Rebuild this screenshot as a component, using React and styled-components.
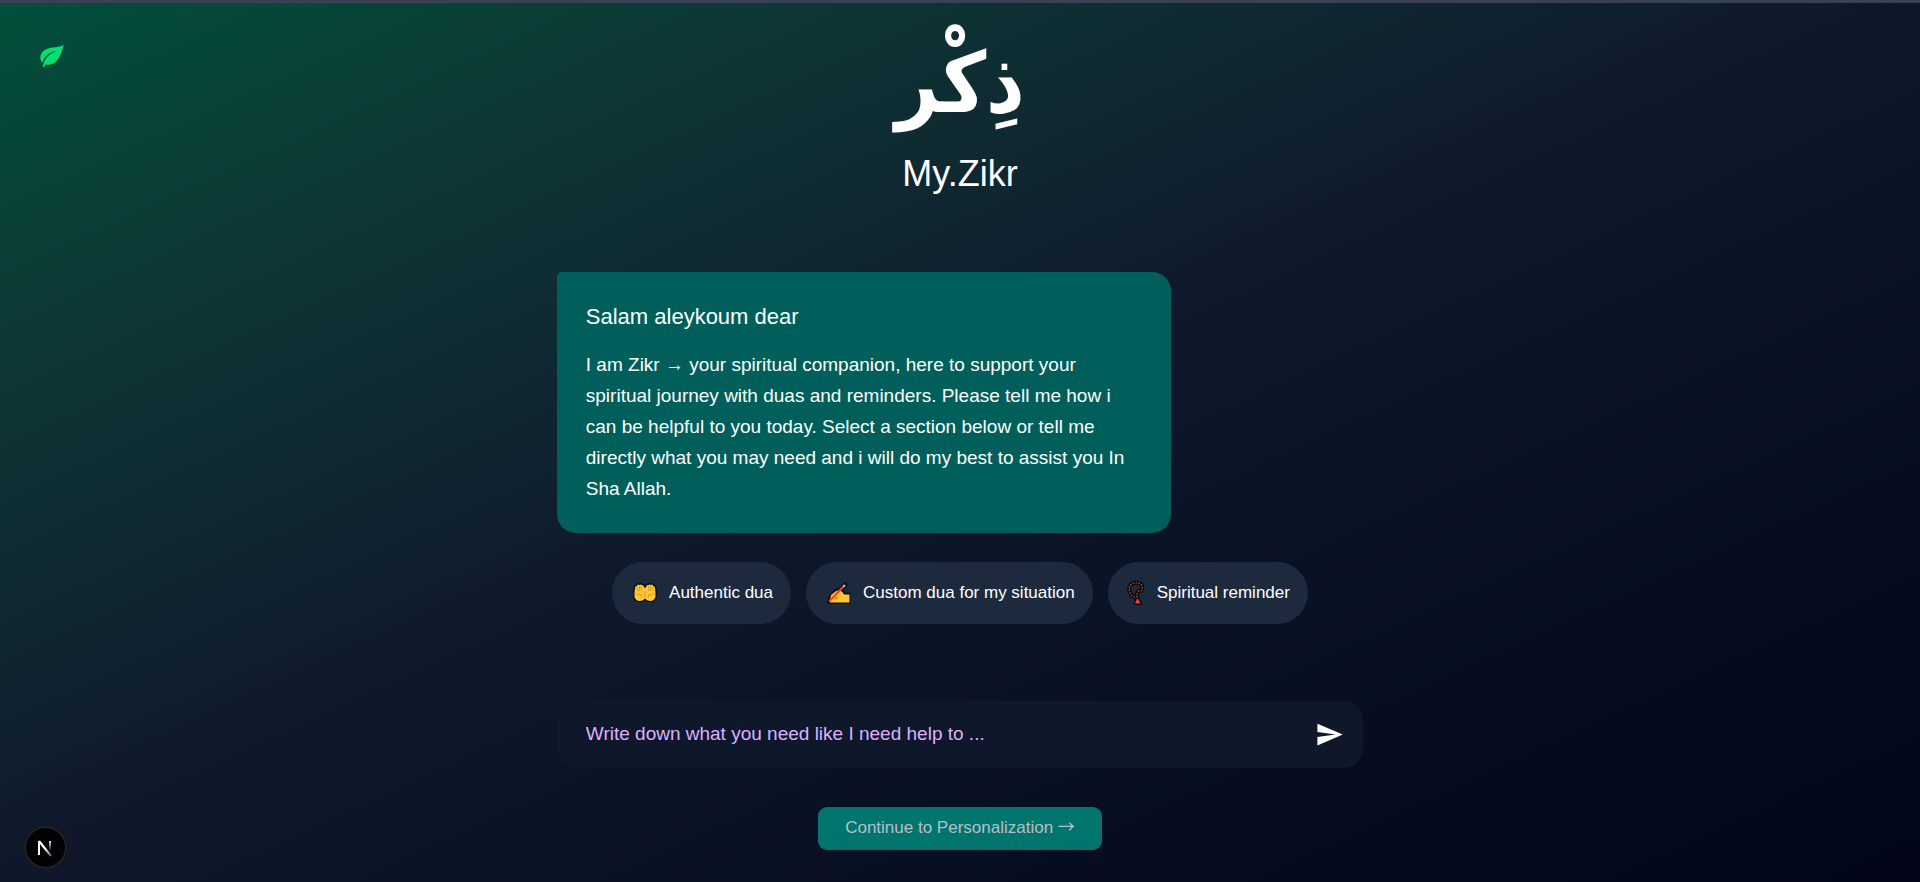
import React from "react";
import styled, { createGlobalStyle } from "styled-components";
import { MdSend } from "react-icons/md";

const GlobalStyle = createGlobalStyle`
  *, *::before, *::after { box-sizing: border-box; }
  body {
    margin: 0;
    background: #020618;
    color: #fff;
    font-family: "Liberation Sans", Arial, sans-serif;
  }
  button, input { font: inherit; color: inherit; border: 0; }
`;

const Page = styled.div`
  position: relative;
  display: flex;
  flex-direction: column;
  align-items: center;
  min-height: 100vh;
  padding-bottom: 32px;
  border-top: 3px solid #3b4155;
  background: linear-gradient(to bottom right in oklab, #004f3b, #0f172b, #020618) border-box;
`;

const HomeLink = styled.a`
  position: absolute;
  top: 41px;
  left: 40px;
  display: flex;
  color: #05df72;
`;

const DevBadge = styled.button`
  position: fixed;
  left: 24px;
  bottom: 13px;
  display: flex;
  align-items: center;
  justify-content: center;
  width: 43px;
  height: 43px;
  padding: 0;
  border-radius: 50%;
  background: #020305;
  box-shadow: inset 0 0 0 2px #222327;
`;

const Header = styled.header`
  display: flex;
  flex-direction: column;
  align-items: center;
  height: 269px;
`;

const Calligraphy = styled.span`
  height: 149px;
  font-family: "DejaVu Sans Condensed", "DejaVu Sans", sans-serif;
  font-size: 84px;
  font-weight: 700;
  line-height: 160px;
`;

const Brand = styled.h1`
  margin: 0;
  font-size: 36px;
  font-weight: 400;
  line-height: 44px;
`;

const Main = styled.main`
  display: flex;
  flex-direction: column;
  align-items: center;
  width: 42%;
`;

const Message = styled.section`
  align-self: flex-start;
  width: 76.2%;
  padding: 28px 29px 29px;
  border-radius: 5px 19px 19px 19px;
  background: #005f5a;
`;

const Greeting = styled.h2`
  margin: 0 0 16px;
  font-size: 22px;
  font-weight: 400;
  line-height: 33px;
`;

const Body = styled.p`
  margin: 0;
  font-size: 19px;
  line-height: 31px;
`;

const Arrow = styled.span`
  font-family: "Noto Sans CJK JP", sans-serif;
  line-height: 1;
`;

const Chips = styled.div`
  display: flex;
  flex-wrap: wrap;
  justify-content: center;
  gap: 15px;
  margin: 29px 0 77px;
`;

const Chip = styled.button`
  display: flex;
  align-items: center;
  gap: 10px;
  height: 62px;
  padding: 0 18px;
  border-radius: 31px;
  background: #1d293d;
  font-size: 17px;
  line-height: 24px;
  white-space: nowrap;
`;

const ChipIcon = styled.span`
  display: flex;
  justify-content: center;
  width: ${(p) => (p.$narrow ? 21 : 29)}px;
`;

const Composer = styled.form`
  display: flex;
  align-items: center;
  width: 100%;
  height: 67px;
  padding: 0 19px 0 29px;
  border-radius: 19px;
  background: #0f172b;
`;

const Prompt = styled.input`
  flex: 1;
  min-width: 0;
  padding: 0 0 2px;
  background: none;
  font-size: 19px;
  line-height: 28px;
  outline: 0;
  &::placeholder { color: #dab2ff; opacity: 1; }
`;

const Send = styled.button`
  display: flex;
  padding: 0;
  background: none;
`;

const Continue = styled.button`
  height: 43px;
  margin-top: 39px;
  padding: 0 27px 2px;
  border-radius: 9px;
  background: #00756e;
  color: #b9bec6;
  font-size: 17px;
  line-height: 24px;
`;

const LeafIcon = () => (
  <svg width="25" height="25" viewBox="0 0 25 25" fill="currentColor" aria-hidden="true">
    <path d="M24 1C20 3.500 14 2.500 8 4.500C2.500 6.500 0 10 .4 14.500C.6 16.500 1.600 18 2.700 18.600C4 12.500 9 8 17 6.500C10 9.500 5.500 13.500 4.200 18L2.600 22C2.700 23.300 4.200 23.300 4.500 22.400L5.400 20.400C8 21.500 12.500 20.500 15.500 18C20.500 14 21.500 7 24 1Z" />
  </svg>
);

const NextIcon = () => (
  <svg width="17" height="19" viewBox="0 0 17 19" fill="none" aria-hidden="true">
    <defs>
      <linearGradient id="stem" x1="0" y1="2" x2="0" y2="13" gradientUnits="userSpaceOnUse">
        <stop stopColor="#fff" />
        <stop offset="1" stopColor="#fff" stopOpacity="0" />
      </linearGradient>
      <linearGradient id="diagonal" x1="8" y1="10" x2="15" y2="18" gradientUnits="userSpaceOnUse">
        <stop stopColor="#fff" />
        <stop offset="1" stopColor="#fff" stopOpacity=".3" />
      </linearGradient>
    </defs>
    <path d="M2 3V17" stroke="#fff" strokeWidth="2" />
    <path d="M2 3L14 18" stroke="url(#diagonal)" strokeWidth="2.200" />
    <path d="M13 3V13" stroke="url(#stem)" strokeWidth="2" />
  </svg>
);

const palms =
  "M1.500 11L2.200 6Q3 4.500 4 5.500V4.500Q5 3 6.200 4Q7.400 2.800 8.500 4Q10.200 3.500 10.800 5.500L12 7.500L13.200 5.500Q13.800 3.500 15.500 4Q16.600 2.800 17.800 4Q19 3 20 4.500V5.500Q21 4.500 21.800 6L22.500 11V16Q21 19.800 17.500 20Q14 20 12 17.500Q10 20 6.500 20Q3 19.800 1.500 16Z";

const HandsIcon = () => (
  <svg width="24" height="24" viewBox="0 0 24 24" aria-hidden="true">
    <path d={palms} fill="#ffc738" stroke="#080d14" strokeWidth="2.600" strokeLinejoin="round" />
    <path d={palms} fill="#ffc738" />
    <path d="M4.200 6V10M6.300 4.500V10M8.300 5V10M19.800 6V10M17.700 4.500V10M15.700 5V10M3 12Q4 14 8 13.500L8.500 16.500M21 12Q20 14 16 13.500L15.500 16.500M12 10V17" stroke="#d18b1c" strokeWidth=".8" fill="none" />
  </svg>
);

const WritingIcon = () => (
  <svg width="24" height="24" viewBox="0 0 24 24" aria-hidden="true">
    <path d="M2 20L3 15L9 9L13 8L16 10L18 13H22.500V21.500H2Z" fill="#ffc738" stroke="#080d14" strokeWidth="2.400" strokeLinejoin="round" />
    <path d="M2 20.500L18 4" stroke="#080d14" strokeWidth="4.500" strokeLinecap="round" />
    <path d="M3 19L4 14L9 10L13 9L15 11L17 13.500H22.500V21.500H3Z" fill="#ffc738" />
    <path d="M8 16.500L11 14.500V17.500Q9 19.500 6 18.500Z" fill="#d99612" />
    <path d="M2 20.500L16 6" stroke="#ef4625" strokeWidth="2" />
    <path d="M16 6L18 4" stroke="#b6bfc9" strokeWidth="2.200" />
  </svg>
);

const BeadsIcon = () => (
  <svg width="18" height="26" viewBox="0 0 18 26" aria-hidden="true">
    <g fill="none" strokeLinecap="round" strokeLinejoin="round">
      <path d="M10 18C4 17 1.500 12 2.500 7C4 2 12 1.500 14.500 5Q16 8 14.500 10.500C10.500 10.500 9 14 10.500 18V20" stroke="#07090c" strokeWidth="4" />
      <path d="M10 18C4 17 1.500 12 2.500 7C4 2 12 1.500 14.500 5Q16 8 14.500 10.500C10.500 10.500 9 14 10.500 18V20" stroke="#c5431f" strokeWidth="1.600" strokeDasharray=".2 2.700" />
      <path d="M10.500 18.500L13.500 23.500H8Z" fill="#ff4526" stroke="#07090c" strokeWidth="3" />
    </g>
    <path d="M10.500 18L13.500 23.500H8Z" fill="#f24a28" />
  </svg>
);

const sections = [
  { label: "Authentic dua", Icon: HandsIcon },
  { label: "Custom dua for my situation", Icon: WritingIcon },
  { label: "Spiritual reminder", Icon: BeadsIcon, narrow: true },
];

export default function App() {
  return (
    <>
      <GlobalStyle />
      <Page>
        <HomeLink href="#" aria-label="Home"><LeafIcon /></HomeLink>
        <Header>
          <Calligraphy lang="ar" dir="rtl">ذِكْر</Calligraphy>
          <Brand>My.Zikr</Brand>
        </Header>
        <Main>
          <Message>
            <Greeting>Salam aleykoum dear</Greeting>
            <Body>
              I am Zikr → your spiritual companion, here to support your spiritual journey with duas and
              reminders. Please tell me how i can be helpful to you today. Select a section below or tell me
              directly what you may need and i will do my best to assist you In Sha Allah.
            </Body>
          </Message>
          <Chips>
            {sections.map(({ label, Icon, narrow }) => (
              <Chip key={label} type="button">
                <ChipIcon $narrow={narrow}><Icon /></ChipIcon>
                {label}
              </Chip>
            ))}
          </Chips>
          <Composer onSubmit={(e) => e.preventDefault()}>
            <Prompt aria-label="Your request" placeholder="Write down what you need like I need help to ..." />
            <Send aria-label="Send"><MdSend size={29} /></Send>
          </Composer>
          <Continue type="button">Continue to Personalization <Arrow>→</Arrow></Continue>
        </Main>
        <DevBadge type="button" aria-label="Developer tools"><NextIcon /></DevBadge>
      </Page>
    </>
  );
}
